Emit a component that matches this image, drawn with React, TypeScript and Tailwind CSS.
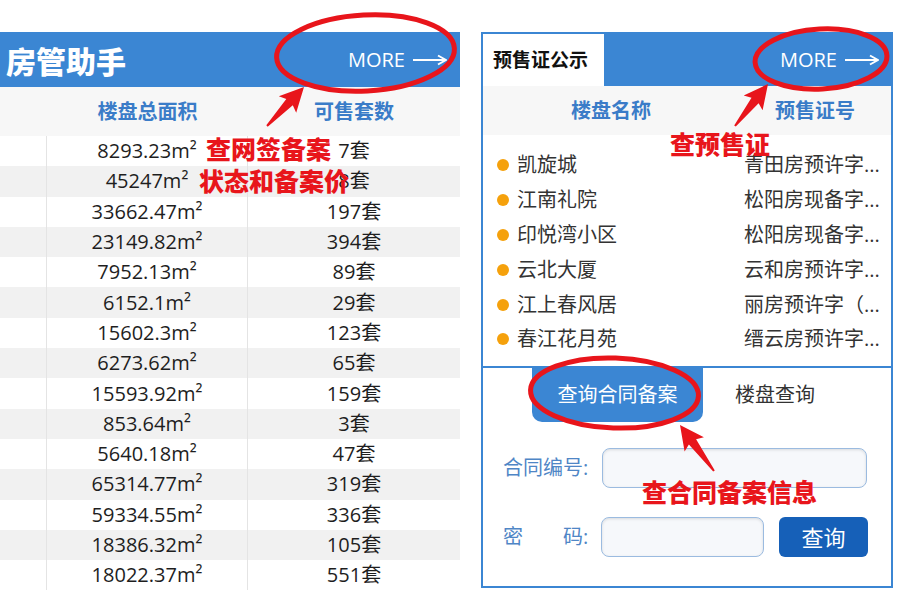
import React from "react";

const leftRows: [string, string][] = [
  ["8293.23", "7"],
  ["45247", "8"],
  ["33662.47", "197"],
  ["23149.82", "394"],
  ["7952.13", "89"],
  ["6152.1", "29"],
  ["15602.3", "123"],
  ["6273.62", "65"],
  ["15593.92", "159"],
  ["853.64", "3"],
  ["5640.18", "47"],
  ["65314.77", "319"],
  ["59334.55", "336"],
  ["18386.32", "105"],
  ["18022.37", "551"],
];

const certRows: [string, string][] = [
  ["凯旋城", "青田房预许字..."],
  ["江南礼院", "松阳房现备字..."],
  ["印悦湾小区", "松阳房现备字..."],
  ["云北大厦", "云和房预许字..."],
  ["江上春风居", "丽房预许字（..."],
  ["春江花月苑", "缙云房预许字..."],
];

function MoreLink() {
  return (
    <div className="flex items-center gap-[8px] text-white text-[20px] leading-none">
      <span>MORE</span>
      <svg width="34" height="12" viewBox="0 0 34 12">
        <line x1="0" y1="6" x2="32" y2="6" stroke="white" strokeWidth="2" />
        <polyline points="25,1.5 33,6 25,10.5" fill="none" stroke="white" strokeWidth="2" />
      </svg>
    </div>
  );
}

function arrowPoints(tx: number, ty: number, hx: number, hy: number) {
  const dx = hx - tx;
  const dy = hy - ty;
  const L = Math.hypot(dx, dy);
  const ux = dx / L;
  const uy = dy / L;
  const px = -uy;
  const py = ux;
  const H = 21;
  const W = 12;
  const w1 = 4.5;
  const w0 = 1;
  const bx = hx - ux * H;
  const by = hy - uy * H;
  const pts = [
    [tx + px * w0, ty + py * w0],
    [bx + px * w1, by + py * w1],
    [bx - ux * 3 + px * W, by - uy * 3 + py * W],
    [hx, hy],
    [bx - ux * 3 - px * W, by - uy * 3 - py * W],
    [bx - px * w1, by - py * w1],
    [tx - px * w0, ty - py * w0],
  ];
  return pts.map((p) => `${p[0].toFixed(1)},${p[1].toFixed(1)}`).join(" ");
}

const redText =
  "absolute text-[25px] font-black leading-[30px] text-[#e8151b] font-['Noto_Sans_CJK_SC',sans-serif] whitespace-nowrap";

export default function App() {
  return (
    <div className="relative w-[900px] h-[600px] bg-white overflow-hidden font-['Open_Sans','Noto_Sans_CJK_SC',sans-serif]">
      <div className="flex pt-[32px]">
        {/* Left panel */}
        <div className="w-[460px] flex flex-col">
          <div className="h-[55px] bg-[#3b86d3] flex items-center justify-between pl-[6px] pr-[13px]">
            <span className="text-white text-[30px] font-black leading-none font-['Noto_Sans_CJK_SC',sans-serif]">房管助手</span>
            <MoreLink />
          </div>
          <div className="h-[49px] bg-[#f7f7f7] grid grid-cols-[47px_201px_1fr] items-center text-[20px] font-bold text-[#3a7cc8]">
            <span />
            <span className="text-center">楼盘总面积</span>
            <span className="text-center">可售套数</span>
          </div>
          <div className="flex flex-col">
            {leftRows.map(([area, n], i) => (
              <div
                key={i}
                className={`h-[30.3px] grid grid-cols-[47px_201px_1fr] items-center text-[20px] text-[#1e1e1e] ${
                  i % 2 === 1 ? "bg-[#f1f1f1]" : "bg-white"
                }`}
              >
                <span className="h-full border-r border-[#e4e4e4]" />
                <span className="h-full border-r border-[#e4e4e4] flex items-center justify-center">
                  {area}m²
                </span>
                <span className="text-center">{n}套</span>
              </div>
            ))}
          </div>
        </div>

        {/* Right panel */}
        <div className="ml-[21px] w-[412px] h-[556px] border-2 border-[#3b86d3] flex flex-col">
          <div className="h-[52px] bg-[#3b86d3] flex items-stretch justify-between pr-[12px]">
            <div className="w-[121px] bg-white flex items-center pl-[10px] text-[19px] font-bold text-[#111]">
              预售证公示
            </div>
            <div className="flex items-center">
              <MoreLink />
            </div>
          </div>
          <div className="h-[49px] bg-[#f7f7f7] grid grid-cols-[256px_1fr] items-center text-[20px] font-bold text-[#3a7cc8]">
            <span className="text-center">楼盘名称</span>
            <span className="text-center">预售证号</span>
          </div>
          <div className="h-[231px] pt-[13px] flex flex-col">
            {certRows.map(([name, cert], i) => (
              <div key={i} className="h-[34.8px] grid grid-cols-[256px_1fr] items-center text-[20px] text-[#333]">
                <div className="flex items-center pl-[14px] gap-[8px]">
                  <span className="w-[12px] h-[12px] rounded-full bg-[#f5a10c]" />
                  <span>{name}</span>
                </div>
                <span className="pl-[5px] whitespace-nowrap">{cert}</span>
              </div>
            ))}
          </div>
          <div className="flex-1 border-t-2 border-[#3b86d3] flex flex-col">
            <div className="flex h-[54px]">
              <div className="ml-[49px] w-[171px] h-full bg-[#3b86d3] rounded-b-[10px] flex items-center justify-center text-white text-[20px]">
                查询合同备案
              </div>
              <div className="w-[144px] flex items-center justify-center text-[20px] text-[#333]">楼盘查询</div>
            </div>
            <div className="mt-[26px] flex items-center pl-[20px]">
              <span className="w-[99px] text-[20px] text-[#4f86c6]">合同编号:</span>
              <div className="w-[265px] h-[40px] rounded-[8px] border border-[#9bbbe0] bg-[#f6f8fb] shadow-[inset_0_1px_3px_rgba(0,0,0,0.12)]" />
            </div>
            <div className="mt-[29px] flex items-center pl-[20px]">
              <span className="w-[98px] text-[20px] text-[#4f86c6]">密　　码:</span>
              <div className="w-[163px] h-[40px] rounded-[8px] border border-[#9bbbe0] bg-[#f6f8fb] shadow-[inset_0_1px_3px_rgba(0,0,0,0.12)]" />
              <div className="ml-[15px] w-[89px] h-[40px] rounded-[6px] bg-[#1660b8] flex items-center justify-center text-white text-[22px]">
                查询
              </div>
            </div>
          </div>
        </div>
      </div>

      {/* Annotations overlay */}
      <svg className="absolute inset-0 pointer-events-none" width="900" height="600" viewBox="0 0 900 600">
        <ellipse cx="365.5" cy="53" rx="89" ry="38" fill="none" stroke="#e8151b" strokeWidth="5" transform="rotate(-3 365.5 53)" />
        <ellipse cx="821" cy="59" rx="66" ry="30" fill="none" stroke="#e8151b" strokeWidth="5" transform="rotate(-3 821 59)" />
        <ellipse cx="614.5" cy="393" rx="84" ry="35" fill="none" stroke="#e8151b" strokeWidth="5" transform="rotate(2 614.5 393)" />
        <polygon points={arrowPoints(267, 126, 304, 87)} fill="#e8151b" />
        <polygon points={arrowPoints(735, 126, 768, 84)} fill="#e8151b" />
        <polygon points={arrowPoints(714, 471, 680, 425)} fill="#e8151b" />
      </svg>
      <div className={`${redText} left-[206px] top-[133px]`}>查网签备案</div>
      <div className={`${redText} left-[199px] top-[165px]`}>状态和备案价</div>
      <div className={`${redText} left-[670px] top-[128px]`}>查预售证</div>
      <div className={`${redText} left-[642px] top-[476px]`}>查合同备案信息</div>
    </div>
  );
}
